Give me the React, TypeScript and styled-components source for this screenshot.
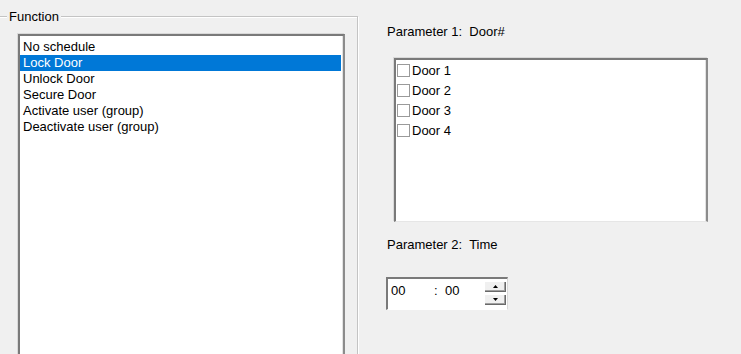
import React, { useState } from 'react';
import styled, { createGlobalStyle } from 'styled-components';

const GlobalStyle = createGlobalStyle`
  html, body {
    margin: 0;
    padding: 0;
    background: #f0f0f0;
    overflow: hidden;
  }
  body {
    font-family: "Liberation Sans", Arial, sans-serif;
    font-size: 13px;
    color: #000;
  }
`;

const Page = styled.div`
  display: flex;
  align-items: flex-start;
  width: 741px;
  height: 354px;
  overflow: hidden;
`;

const GroupBox = styled.fieldset`
  margin: 9px 0 0 -2px;
  padding: 0;
  width: 360px;
  height: 400px;
  box-sizing: border-box;
  border: 1px solid #c4c4c4;
  box-shadow: 1px 1px 0 #fff, inset 1px 1px 0 #fff;
  min-inline-size: 0;
`;

const Legend = styled.legend`
  margin-left: 8px;
  padding: 0 2px;
  line-height: 15px;
  background: #f0f0f0;
`;

const Sunken = styled.div`
  box-sizing: border-box;
  background: #fff;
  border-top: 2px solid #7a7a7a;
  border-left: 2px solid #7a7a7a;
  border-right: 2px solid #8c8c8c;
  border-bottom: 1px solid #e6e6e6;
  box-shadow: -1px -1px 0 #d9d9d9, inset -1px 0 0 #e3e3e3;
`;

const FunctionList = styled(Sunken)`
  margin: 10px 0 0 19px;
  width: 327px;
  height: 360px;
  padding-top: 3px;
`;

const FunctionItem = styled.div<{ $selected?: boolean }>`
  height: 16px;
  line-height: 16px;
  padding-left: 3px;
  margin-right: 2px;
  white-space: nowrap;
  background: ${p => (p.$selected ? '#0078d7' : 'transparent')};
  color: ${p => (p.$selected ? '#fff' : '#000')};
  cursor: default;
`;

const Params = styled.div`
  display: flex;
  flex-direction: column;
  align-items: flex-start;
  margin-left: 28px;
  padding-top: 24px;
`;

const ParamLabel = styled.div<{ $gap?: number }>`
  margin-top: ${p => p.$gap ?? 0}px;
  line-height: 16px;
  white-space: pre;
  padding-left: 1px;
`;

const DoorList = styled(Sunken)`
  margin: 18px 0 0 8px;
  width: 314px;
  height: 164px;
`;

const DoorRow = styled.label`
  display: flex;
  align-items: center;
  height: 20px;
  padding-left: 1px;
  cursor: default;
`;

const Check = styled.span`
  width: 11px;
  height: 11px;
  border: 1px solid #9a9a9a;
  background: #fff;
  margin-right: 2px;
  display: flex;
  align-items: center;
  justify-content: center;
  font-size: 10px;
  line-height: 1;
`;

const TimeBox = styled.div`
  display: flex;
  align-items: flex-start;
  box-sizing: border-box;
  margin: 24px 0 0 0;
  width: 122px;
  height: 33px;
  background: #fff;
  border-top: 2px solid #7a7a7a;
  border-left: 2px solid #7a7a7a;
  border-right: 1px solid #d8d8d8;
  border-bottom: 1px solid #fff;
`;

const TimeText = styled.span<{ $w: number; $pad?: number }>`
  width: ${p => p.$w}px;
  padding-left: ${p => p.$pad ?? 0}px;
  line-height: 16px;
  padding-top: 4px;
`;

const Spin = styled.div`
  display: flex;
  flex-direction: column;
  gap: 2px;
  margin: 2px 1px 0 auto;
`;

const SpinButton = styled.button`
  width: 22px;
  height: 11px;
  padding: 0;
  display: flex;
  align-items: center;
  justify-content: center;
  background: #f0f0f0;
  border: none;
  box-shadow: inset 1px 1px 0 #fff, inset -1px -1px 0 #696969, inset -2px -2px 0 #a0a0a0;
`;

const Arrow = ({ up }: { up?: boolean }) => (
  <svg width="5" height="3" viewBox="0 0 5 3">
    <path d={up ? 'M2.5 0L5 3H0Z' : 'M0 0H5L2.5 3Z'} fill="#000" />
  </svg>
);

const functions = [
  'No schedule',
  'Lock Door',
  'Unlock Door',
  'Secure Door',
  'Activate user (group)',
  'Deactivate user (group)',
];

const doors = ['Door 1', 'Door 2', 'Door 3', 'Door 4'];

export default function App() {
  const [selected, setSelected] = useState(1);
  const [checked, setChecked] = useState<boolean[]>([false, false, false, false]);

  return (
    <>
      <GlobalStyle />
      <Page>
        <GroupBox>
          <Legend>Function</Legend>
          <FunctionList>
            {functions.map((f, i) => (
              <FunctionItem key={f} $selected={i === selected} onClick={() => setSelected(i)}>
                {f}
              </FunctionItem>
            ))}
          </FunctionList>
        </GroupBox>

        <Params>
          <ParamLabel>Parameter 1:  Door#</ParamLabel>
          <DoorList>
            {doors.map((d, i) => (
              <DoorRow
                key={d}
                onClick={() => setChecked(c => c.map((v, j) => (j === i ? !v : v)))}
              >
                <Check>{checked[i] ? '✓' : ''}</Check>
                {d}
              </DoorRow>
            ))}
          </DoorList>

          <ParamLabel $gap={15}>Parameter 2:  Time</ParamLabel>
          <TimeBox>
            <TimeText $w={43} $pad={3}>00</TimeText>
            <TimeText $w={11}>:</TimeText>
            <TimeText $w={20}>00</TimeText>
            <Spin>
              <SpinButton aria-label="up"><Arrow up /></SpinButton>
              <SpinButton aria-label="down"><Arrow /></SpinButton>
            </Spin>
          </TimeBox>
        </Params>
      </Page>
    </>
  );
}
